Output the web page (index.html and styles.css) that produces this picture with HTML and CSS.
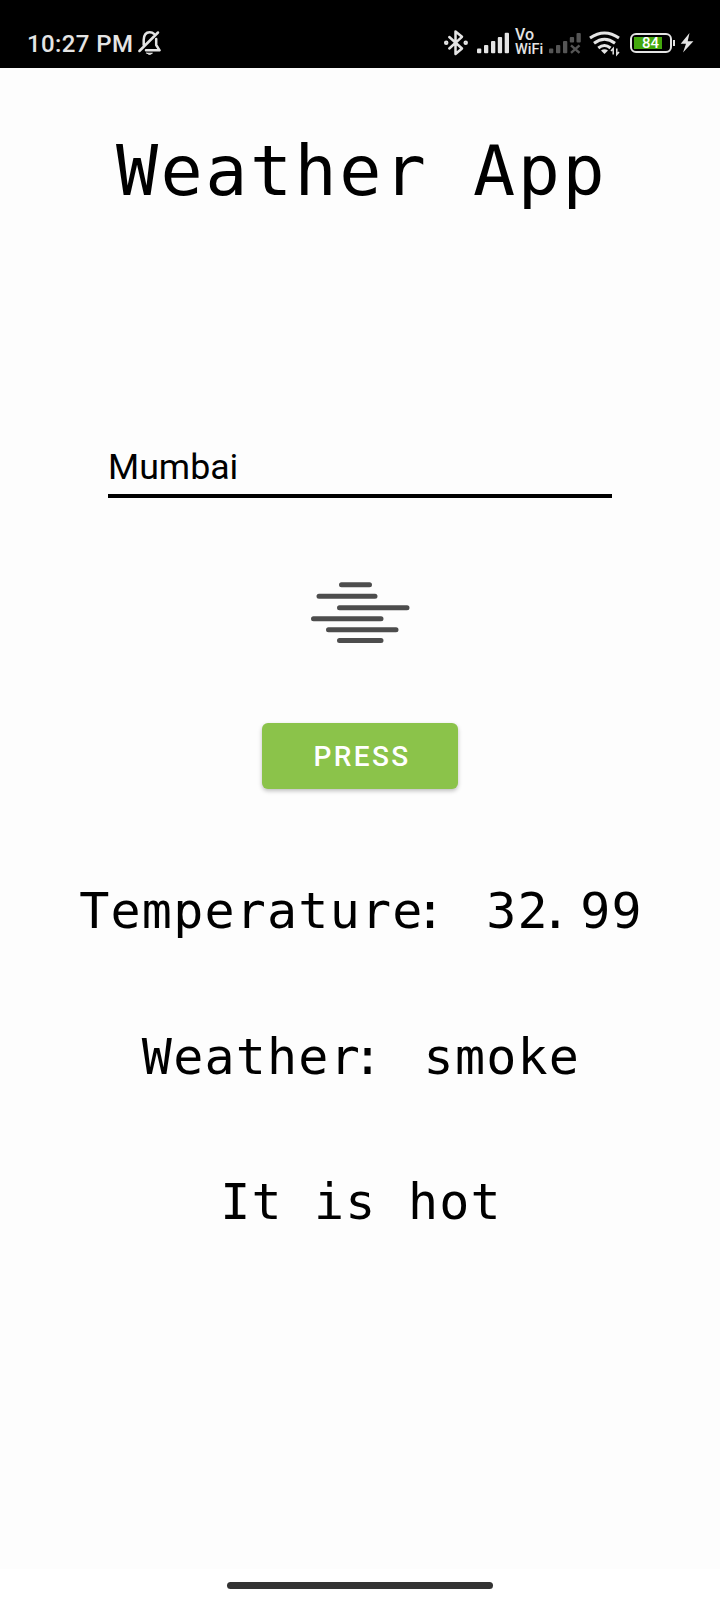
FILE: index.html
```html
<!DOCTYPE html>
<html lang="en">
<head>
<meta charset="utf-8">
<title>Weather App</title>
<link rel="stylesheet" href="styles.css">
</head>
<body>
<header class="status">
  <span class="time">10:27 PM</span>
  <svg class="bell" width="30" height="68" viewBox="135 0 30 68" fill="none" stroke="#e4e4e4" stroke-width="2.5" stroke-linecap="round" stroke-linejoin="round">
    <path d="M143.7 45V40Q144 32.3 149.6 32.3Q152.4 32.3 154 33.8M156.2 39V45L159.6 50.3H146M158 32.5L139.4 51"/>
    <path d="M146.8 53.2H152.4Q149.6 56 146.8 53.2Z" fill="#e4e4e4" stroke-width="1"/>
  </svg>
  <span class="spacer"></span>
  <svg width="32" height="68" viewBox="440 0 32 68" fill="none" stroke="#e4e4e4" stroke-width="2.5" stroke-linejoin="round" stroke-linecap="round">
    <path d="M449.3 37L462 48.5L455.5 54V31.5L462 36.8L449.3 48.5"/>
    <circle cx="446.2" cy="42.8" r="1"/><circle cx="465.7" cy="42.8" r="1"/>
  </svg>
  <svg width="40" height="68" viewBox="472 0 40 68" fill="#e4e4e4">
    <rect x="477" y="48.5" width="4.3" height="4.8" rx="1"/><rect x="484" y="45" width="4.3" height="8.3" rx="1"/><rect x="491" y="41" width="4.3" height="12.3" rx="1"/><rect x="497.8" y="37" width="4.3" height="16.3" rx="1"/><rect x="504.7" y="32.8" width="4.3" height="20.5" rx="1"/>
  </svg>
  <span class="vowifi"><span class="vo">Vo</span><span class="wifi">WiFi</span></span>
  <svg width="40" height="68" viewBox="546 0 40 68" fill="#555">
    <rect x="549" y="48.5" width="4.3" height="4.8" rx="1"/><rect x="556" y="45" width="4.3" height="8.3" rx="1"/><rect x="563" y="41" width="4.3" height="12.3" rx="1"/><rect x="569.8" y="37" width="4.3" height="5.5" rx="1"/><rect x="576.5" y="33" width="4.3" height="9.5" rx="1"/>
    <path d="M571 45.3L579.5 52.9M579.5 45.3L571 52.9" stroke="#555" stroke-width="2.4"/>
  </svg>
  <svg width="40" height="68" viewBox="586 0 40 68" fill="none" stroke="#e4e4e4" stroke-width="3">
    <path d="M590 38Q604.5 28 619 38M594 43.2Q604.5 35.2 615 43.2M598.3 48Q604.5 43 610.5 48"/>
    <path d="M601 50.5Q604.5 48 608 50.5L604.5 54Z" fill="#e4e4e4" stroke="none"/>
    <path d="M613.2 54.5V48.5L611 51M616.8 48.5V54.5L619 52" stroke-width="1.5"/>
  </svg>
  <div class="battery"><div class="cell"><span class="level">84</span></div><i class="cap"></i></div>
  <svg width="16" height="68" viewBox="679 0 16 68" fill="#e4e4e4"><path d="M689.5 33L680.7 43.8H686L683 52.5L693.4 41.3H687.7Z"/></svg>
</header>
<main class="page">
  <h1 class="title">Weather App</h1>
  <div class="field">Mumbai</div>
  <svg class="smoke" width="104" height="66" viewBox="308 580 104 66" stroke="#4d4d4d" stroke-width="5" stroke-linecap="round">
    <path d="M341.5 584.8H369.5M319 596.2H375M339.5 607.7H407M313.5 618.7H381M328.5 629.8H396M339.5 640.5H381"/>
  </svg>
  <button class="press">PRESS</button>
  <section class="results">
    <p class="line">Temperatur<span class="tuck">e</span><span class="mark">:</span> 3<span class="tuck">2</span><span class="mark">.</span>99</p>
    <p class="line">Weathe<span class="tuck">r</span><span class="mark">:</span> smoke</p>
    <p class="line">It is hot</p>
  </section>
</main>
<footer class="nav"><div class="handle"></div></footer>
</body>
</html>
```

FILE: styles.css
```css
* { box-sizing: border-box; }
body {
  margin: 0;
  width: 720px;
  height: 1600px;
  display: flex;
  flex-direction: column;
  background: #fdfdfd;
  color: #000;
  font-family: Roboto, sans-serif;
  overflow: hidden;
}
.status {
  height: 68px;
  flex: none;
  display: flex;
  background: #000;
  color: #e4e4e4;
  padding: 0 25px 0 27px;
}
.time {
  width: 108px;
  font-size: 24px;
  font-weight: 500;
  letter-spacing: .4px;
  line-height: 28px;
  padding-top: 30px;
  white-space: nowrap;
}
.spacer { flex: 1; }
.vowifi {
  width: 34px;
  display: flex;
  flex-direction: column;
  padding: 27px 0 0 3px;
  white-space: nowrap;
}
.vo { font: 500 16px/16px Roboto, sans-serif; }
.wifi { font: 500 14.5px/14px Roboto, sans-serif; }
.battery {
  width: 53px;
  display: flex;
  align-items: center;
  padding: 18px 0 0 4px;
}
.cell {
  width: 42px;
  height: 20px;
  border: 2px solid #e4e4e4;
  border-radius: 6px;
  padding: 2px;
}
.level {
  display: block;
  width: 28px;
  height: 12px;
  background: #43a80d;
  color: #fff;
  font: 500 15px/13px Roboto, sans-serif;
  text-indent: 8px;
}
.cap {
  width: 2px;
  height: 6px;
  margin-left: 1px;
  background: #e4e4e4;
}
.page {
  flex: 1;
  display: flex;
  flex-direction: column;
  align-items: center;
}
.title {
  margin: 58px 0 0;
  padding-left: 3px;
  font: 400 70px/90px "DejaVu Sans Mono", monospace;
  letter-spacing: 2.5px;
  white-space: pre;
}
.field {
  width: 504px;
  height: 53px;
  margin-top: 229px;
  border-bottom: 4px solid #000;
  font-size: 35.7px;
  line-height: 45px;
}
.smoke { margin-top: 82px; }
.press {
  width: 196px;
  height: 66px;
  margin-top: 77px;
  padding: 2px 0 0 4px;
  border: 0;
  border-radius: 6px;
  background: #8bc34a;
  color: #fff;
  font: 500 28px/64px Roboto, sans-serif;
  letter-spacing: 2.4px;
  box-shadow: 0 2px 4px rgba(0, 0, 0, .25);
}
.results {
  display: flex;
  flex-direction: column;
  align-items: center;
  gap: 79.5px;
  margin-top: 89px;
}
.line {
  margin: 0;
  padding-left: 2px;
  font: 400 50px/66px "DejaVu Sans Mono", monospace;
  letter-spacing: 1.2px;
  white-space: pre;
}
/* Pulls punctuation toward the preceding character */
.tuck { letter-spacing: -7.3px; }
.mark { padding-right: 8.5px; }
.nav {
  height: 31px;
  flex: none;
  display: flex;
  justify-content: center;
  padding-top: 13px;
  background: #fff;
}
.handle {
  width: 266px;
  height: 7px;
  border-radius: 4px;
  background: #333;
}
```
